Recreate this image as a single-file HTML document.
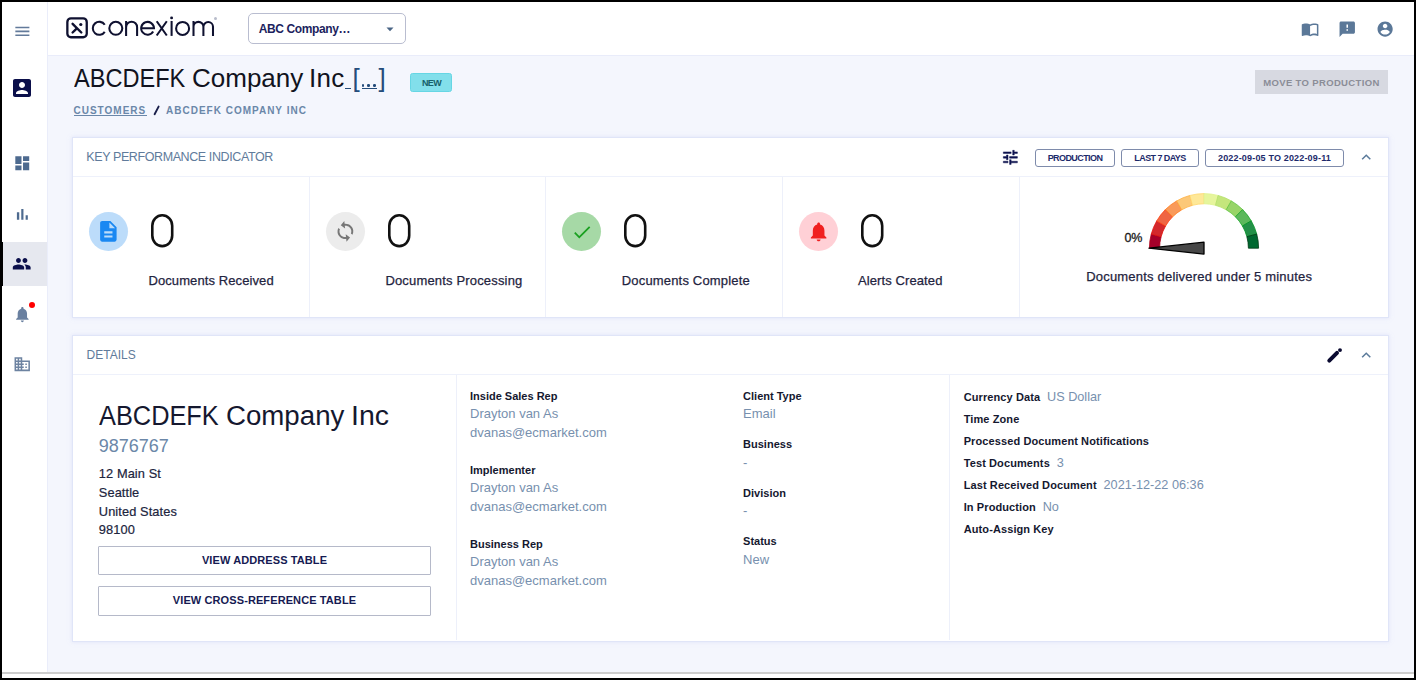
<!DOCTYPE html>
<html><head><meta charset="utf-8"><style>
html,body{margin:0;padding:0}
body{width:1416px;height:680px;background:#000;position:relative;overflow:hidden;font-family:"Liberation Sans", sans-serif}
.t{position:absolute;line-height:1;white-space:nowrap}
.btn{position:absolute;box-sizing:border-box;border:1px solid #7e8bab;border-radius:3px;font-size:9px;font-weight:700;color:#1d2a6b;text-align:center;line-height:16px;letter-spacing:-0.45px;background:#fff}
.btn2{position:absolute;box-sizing:border-box;border:1px solid #b5b9c9;border-radius:1px;font-size:11px;font-weight:700;color:#161a52;text-align:center;background:#fff;display:flex;align-items:center;justify-content:center;padding-bottom:1.5px;letter-spacing:0.1px}
</style></head><body>
<div style="position:absolute;left:2px;top:2px;width:1412px;height:670px;background:#f4f6fd"></div>
<div style="position:absolute;left:2px;top:2px;width:45px;height:670px;background:#fff"></div>
<div style="position:absolute;left:47px;top:2px;width:1px;height:670px;background:#eaedfa"></div>
<div style="position:absolute;left:48px;top:2px;width:1366px;height:53px;background:#fff"></div>
<div style="position:absolute;left:48px;top:55px;width:1366px;height:1px;background:#e9ecfa"></div>
<div style="position:absolute;left:2px;top:672px;width:1412px;height:6px;background:#fff"></div>
<div style="position:absolute;left:2px;top:672px;width:1412px;height:1.5px;background:#cdcdcd"></div>
<svg style="position:absolute;left:12.66px;top:22.40px;overflow:visible;" width="18.72" height="18.72" viewBox="0 0 24 24"><path fill="#627a9a" d="M3 18h18v-2H3v2zm0-5h18v-2H3v2zm0-7v2h18V6H3z"/></svg>
<svg style="position:absolute;left:10.20px;top:76.20px;overflow:visible;" width="24.00" height="24.00" viewBox="0 0 24 24"><path fill="#0b0f4a" d="M3 5v14c0 1.1.89 2 2 2h14c1.1 0 2-.9 2-2V5c0-1.1-.9-2-2-2H5c-1.11 0-2 .9-2 2zm12 4c0 1.66-1.34 3-3 3s-3-1.34-3-3 1.34-3 3-3 3 1.34 3 3zm-9 8c0-2 4-3.1 6-3.1s6 1.1 6 3.1v1H6v-1z"/></svg>
<svg style="position:absolute;left:12.90px;top:154.30px;overflow:visible;" width="18.53" height="18.53" viewBox="0 0 24 24"><path fill="#4d6a8f" d="M3 13h8V3H3v10zm0 8h8v-6H3v6zm10 0h8V11h-8v10zm0-18v6h8V3h-8z"/></svg>
<svg style="position:absolute;left:13.00px;top:204.60px;overflow:visible;" width="18.72" height="18.72" viewBox="0 0 24 24"><path fill="#4d6a8f" d="M5 9.2h3V19H5zM10.6 5h2.8v14h-2.8zm5.6 8H19v6h-2.8z"/></svg>
<div style="position:absolute;left:2px;top:242px;width:45px;height:44px;background:#e6e8ef"></div>
<div style="position:absolute;left:2px;top:242px;width:1px;height:44px;background:#000"></div>
<svg style="position:absolute;left:12.10px;top:254.25px;overflow:visible;" width="19.44" height="19.44" viewBox="0 0 24 24"><path fill="#0b0f4a" d="M16 11c1.66 0 2.99-1.34 2.99-3S17.66 5 16 5c-1.66 0-3 1.34-3 3s1.34 3 3 3zm-8 0c1.66 0 2.99-1.34 2.99-3S9.66 5 8 5C6.34 5 5 6.34 5 8s1.340 3 3 3zm0 2c-2.33 0-7 1.17-7 3.5V19h14v-2.5c0-2.33-4.67-3.5-7-3.5zm8 0c-.29 0-.62.02-.97.05 1.16.84 1.97 1.97 1.970 3.45V19h6v-2.5c0-2.33-4.67-3.5-7-3.5z"/></svg>
<svg style="position:absolute;left:12.90px;top:304.95px;overflow:visible;" width="18.72" height="18.72" viewBox="0 0 24 24"><path fill="#6a80a0" d="M12 22c1.1 0 2-.9 2-2h-4c0 1.1.89 2 2 2zm6-6v-5c0-3.07-1.64-5.64-4.5-6.32V4c0-.83-.67-1.5-1.5-1.5s-1.5.67-1.5 1.5v.68C7.63 5.36 6 7.920 6 11v5l-2 2v1h16v-1l-2-2z"/></svg>
<div style="position:absolute;left:28.7px;top:301.8px;width:6.4px;height:6.4px;background:#f00;border-radius:50%"></div>
<svg style="position:absolute;left:13.20px;top:355.40px;overflow:visible;" width="18.48" height="18.48" viewBox="0 0 24 24"><path fill="#6d83a1" d="M12 7V3H2v18h20V7H12zM6 19H4v-2h2v2zm0-4H4v-2h2v2zm0-4H4V9h2v2zm0-4H4V5h2v2zm4 12H8v-2h2v2zm0-4H8v-2h2v2zm0-4H8V9h2v2zm0-4H8V5h2v2zm10 12h-8v-2h2v-2h-2v-2h2v-2h-2V9h8v10zm-2-8h-2v2h2v-2zm0 4h-2v2h2v-2z"/></svg>
<svg style="position:absolute;left:64px;top:16px" width="26" height="24" viewBox="0 0 26 24"><rect x="3.35" y="2.35" width="19.4" height="18.9" rx="3.6" fill="none" stroke="#0f1130" stroke-width="2.3"/><path d="M8.6 7.8 L17.3 16.5 M8.6 16.5 L12.1 13.1" stroke="#0f1130" stroke-width="2.4" stroke-linecap="round" fill="none"/><circle cx="16.8" cy="8.5" r="1.6" fill="#0f1130"/></svg>
<svg style="position:absolute;left:88px;top:12px" width="132" height="30" viewBox="88 12 132 30"><g fill="none" stroke="#0f1130" stroke-width="2.05"><path d="M104.75 24.76 A6.5 6.5 0 1 0 104.75 31.84"/><circle cx="115.8" cy="28.3" r="6.5"/><path d="M126.1 20.950000000000003 V35.9 M126.1 27.2 A5.5 5.5 0 0 1 137.1 27.2 V35.9"/><path d="M141.2 28.3 H154.0 A6.4 6.4 0 1 0 153.14 31.50"/><path d="M156.7 21.25 L166.8 35.5 M166.8 21.25 L156.7 35.5"/><path d="M171.6 20.950000000000003 V35.9"/><circle cx="182.6" cy="28.400000000000002" r="6.5"/><path d="M193.5 20.950000000000003 V35.9 M193.5 26.8 A4.95 4.95 0 0 1 203.4 26.8 V35.9 M203.4 26.8 A4.8 4.8 0 0 1 213.0 26.8 V35.9"/></g><circle cx="171.6" cy="17.9" r="1.45" fill="#0f1130"/></svg>
<div style="position:absolute;left:213.8px;top:17.4px;width:3px;height:3px;border-radius:50%;background:#b8bccb"></div>
<div style="position:absolute;left:248px;top:13px;width:158px;height:31px;box-sizing:border-box;border:1px solid #b9bdd0;border-radius:5px;background:#fff"></div>
<div class="t" style="left:258.80px;top:22.54px;font-size:12px;font-weight:700;color:#1c1f5e;letter-spacing:-0.4px;">ABC Company…</div>
<svg style="position:absolute;left:386px;top:26.5px" width="8" height="5" viewBox="0 0 8 5"><path d="M0.5 0.5 L7.5 0.5 L4 4.2 Z" fill="#4a6585"/></svg>
<svg style="position:absolute;left:1300.50px;top:19.90px;overflow:visible;" width="18.17" height="18.17" viewBox="0 0 24 24"><path fill="#5b7898" d="M21 5c-1.11-.35-2.33-.5-3.5-.5-1.95 0-4.05.4-5.5 1.5-1.45-1.1-3.550-1.5-5.5-1.5S2.45 4.9 1 6v14.65c0 .25.25.5.5.5.1 0 .15-.05.25-.05C3.1 20.45 5.05 20 6.5 20c1.95 0 4.05.4 5.5 1.5 1.35-.85 3.8-1.5 5.5-1.5 1.65 0 3.35.3 4.75 1.05.1.05.15.05.25.05.25 0 .5-.25.5-.5V6c-.6-.45-1.25-.75-2-1zm0 13.5c-1.1-.35-2.3-.5-3.5-.5-1.7 0-4.15.65-5.5 1.5V8c1.35-.85 3.8-1.5 5.5-1.5 1.2 0 2.4.15 3.5.5v11.5z"/></svg>
<svg style="position:absolute;left:1337.80px;top:19.90px;overflow:visible;" width="18.48" height="18.48" viewBox="0 0 24 24"><path fill="#5b7898" d="M20 2H4c-1.1 0-1.99.9-1.99 2L2 22l4-4h14c1.1 0 2-.9 2-2V4c0-1.1-.9-2-2-2zm-7 12h-2v-2h2v2zm0-4h-2V6h2v4z"/></svg>
<svg style="position:absolute;left:1376.30px;top:19.90px;overflow:visible;" width="18.24" height="18.24" viewBox="0 0 24 24"><path fill="#5b7898" d="M12 2C6.48 2 2 6.48 2 12s4.48 10 10 10 10-4.48 10-10S17.52 2 12 2zm0 3c1.66 0 3 1.34 3 3s-1.34 3-3 3-3-1.34-3-3 1.34-3 3-3zm0 14.2c-2.5 0-4.71-1.28-6-3.220.03-1.99 4-3.08 6-3.08 1.99 0 5.97 1.09 6 3.08-1.29 1.94-3.5 3.22-6 3.22z"/></svg>
<div class="t" style="left:74.00px;top:64.89px;font-size:26px;font-weight:400;color:#111320;letter-spacing:0px;transform:scaleX(0.906);transform-origin:0 0">ABCDEFK</div>
<div class="t" style="left:192.00px;top:64.89px;font-size:26px;font-weight:400;color:#111320;letter-spacing:0px;">Company</div>
<div class="t" style="left:308.90px;top:64.89px;font-size:26px;font-weight:400;color:#111320;letter-spacing:0.3px;">Inc</div>
<div class="t" style="left:352.50px;top:64.89px;font-size:26px;font-weight:400;color:#244c7b;letter-spacing:0px;">[</div>
<div class="t" style="left:378.50px;top:64.89px;font-size:26px;font-weight:400;color:#244c7b;letter-spacing:0px;">]</div>
<div style="position:absolute;left:361.6px;top:84.2px;width:2.4px;height:2.4px;background:#244c7b;border-radius:50%"></div>
<div style="position:absolute;left:367.40000000000003px;top:84.2px;width:2.4px;height:2.4px;background:#244c7b;border-radius:50%"></div>
<div style="position:absolute;left:373.2px;top:84.2px;width:2.4px;height:2.4px;background:#244c7b;border-radius:50%"></div>
<div style="position:absolute;left:361.5px;top:88.2px;width:15.3px;height:1.3px;background:#244c7b"></div>
<div style="position:absolute;left:345px;top:88.2px;width:6.4px;height:1.3px;background:#244c7b"></div>
<div style="position:absolute;left:410px;top:73px;width:42px;height:19px;box-sizing:border-box;background:#82dfeb;border:1px solid #66d6e4;border-radius:2.5px"></div>
<div class="t" style="left:421.90px;top:78.78px;font-size:9px;font-weight:700;color:#17606a;letter-spacing:-0.55px;">NEW</div>
<div class="t" style="left:73.50px;top:106.33px;font-size:10px;font-weight:700;color:#6a87a9;letter-spacing:1.0px;">CUSTOMERS</div>
<div style="position:absolute;left:73.5px;top:115px;width:73px;height:1.2px;background:#6a87a9"></div>
<svg style="position:absolute;left:150px;top:104px" width="12" height="14" viewBox="150 104 12 14"><path d="M158.6 106.6 L154.6 114.2" stroke="#1a1f4a" stroke-width="1.9" stroke-linecap="round"/></svg>
<div class="t" style="left:166.00px;top:106.33px;font-size:10px;font-weight:700;color:#6a87a9;letter-spacing:1.0px;">ABCDEFK COMPANY INC</div>
<div style="position:absolute;left:1255px;top:70px;width:133px;height:24px;background:#d7d9e1"></div>
<div class="t" style="left:1263.20px;top:78.36px;font-size:9.5px;font-weight:700;color:#8b8d97;letter-spacing:0.35px;">MOVE TO PRODUCTION</div>
<div style="position:absolute;left:72px;top:137px;width:1317px;height:181px;box-sizing:border-box;border:1px solid #e0e5f8;background:#fff;box-shadow:0 0 4px rgba(205,210,245,0.55)"></div>
<div style="position:absolute;left:73px;top:176px;width:1315px;height:1px;background:#eef1fb"></div>
<div class="t" style="left:86.30px;top:150.82px;font-size:12.5px;font-weight:400;color:#607b9b;letter-spacing:-0.4px;">KEY PERFORMANCE INDICATOR</div>
<svg style="position:absolute;left:1001.00px;top:148.00px;overflow:visible;" width="18.72" height="18.72" viewBox="0 0 24 24"><path fill="#0f1450" d="M3 17v2h6v-2H3zM3 5v2h10V5H3zm10 16v-2h8v-2h-8v-2h-2v6h2zM7 9v2H3v2h4v2h2V9H7zm14 4v-2H11v2h10zm-6-4h2V7h4V5h-4V3h-2v6z" stroke="#0f1450" stroke-width="0.6" stroke-linejoin="round"/></svg>
<div class="btn" style="left:1035px;top:148.5px;width:80px;height:18px;letter-spacing:-0.59px">PRODUCTION</div>
<div class="btn" style="left:1121px;top:148.5px;width:78px;height:18px;letter-spacing:-0.57px">LAST 7 DAYS</div>
<div class="btn" style="left:1205px;top:148.5px;width:139px;height:18px;letter-spacing:0.17px">2022-09-05 TO 2022-09-11</div>
<svg style="position:absolute;left:1356.70px;top:148.30px;overflow:visible;" width="18.48" height="18.48" viewBox="0 0 24 24"><path fill="#5a7a9a" d="M12 8l-6 6 1.41 1.41L12 10.83l4.59 4.58L18 14z"/></svg>
<div style="position:absolute;left:309px;top:177px;width:1px;height:140px;background:#edf0fa"></div>
<div style="position:absolute;left:545px;top:177px;width:1px;height:140px;background:#edf0fa"></div>
<div style="position:absolute;left:782px;top:177px;width:1px;height:140px;background:#edf0fa"></div>
<div style="position:absolute;left:1019px;top:177px;width:1px;height:140px;background:#edf0fa"></div>
<div style="position:absolute;left:89.1px;top:212.1px;width:39px;height:39px;background:#bcdcfa;border-radius:50%"></div>
<div style="position:absolute;left:326.1px;top:212.1px;width:39px;height:39px;background:#ececec;border-radius:50%"></div>
<div style="position:absolute;left:562.4px;top:212.1px;width:39px;height:39px;background:#a6d9a6;border-radius:50%"></div>
<div style="position:absolute;left:798.9px;top:212.1px;width:39px;height:39px;background:#ffd0d6;border-radius:50%"></div>
<svg style="position:absolute;left:95.90px;top:219.40px;overflow:visible;" width="24.72" height="24.72" viewBox="0 0 24 24"><path fill="#1a88f2" d="M14 2H6c-1.1 0-1.99.9-1.99 2L4 20c0 1.1.89 2 1.99 2H18c1.1 0 2-.9 2-2V8l-6-6zm2 16H8v-2h8v2zm0-4H8v-2h8v2zm-3-5V3.5L18.5 9H13z"/></svg>
<svg style="position:absolute;left:334.20px;top:220.20px;overflow:visible;transform:rotate(-6deg) scale(1.04,1)" width="22.80" height="22.80" viewBox="0 0 24 24"><path fill="#777777" d="M12 4V1L8 5l4 4V6c3.31 0 6 2.69 6 6 0 1.01-.25 1.97-.7 2.8l1.46 1.46C19.54 15.03 20 13.57 20 12c0-4.42-3.58-8-8-8zm0 14c-3.31 0-6-2.69-6-6 0-1.01.25-1.97.7-2.8L5.24 7.740C4.46 8.97 4 10.43 4 12c0 4.42 3.58 8 8 8v3l4-4-4-4v3z"/></svg>
<svg style="position:absolute;left:570.50px;top:220.60px;overflow:visible;" width="22.08" height="22.08" viewBox="0 0 24 24"><path fill="#1aa020" d="M9 16.2L4.8 12l-1.4 1.4L9 19 21 7l-1.4-1.4L9 16.2z"/></svg>
<svg style="position:absolute;left:806.70px;top:219.70px;overflow:visible;" width="23.28" height="23.28" viewBox="0 0 24 24"><path fill="#f02020" d="M12 22c1.1 0 2-.9 2-2h-4c0 1.1.89 2 2 2zm6-6v-5c0-3.07-1.64-5.64-4.5-6.32V4c0-.83-.67-1.5-1.5-1.5s-1.5.67-1.5 1.5v.68C7.63 5.36 6 7.920 6 11v5l-2 2v1h16v-1l-2-2z"/></svg>
<svg style="position:absolute;left:151.4px;top:214.2px" width="24" height="34" viewBox="0 0 24 34"><rect x="1.3" y="1.3" width="19.9" height="30.8" rx="9.9" ry="10.5" fill="none" stroke="#111" stroke-width="2.6"/></svg>
<svg style="position:absolute;left:387.9px;top:214.2px" width="24" height="34" viewBox="0 0 24 34"><rect x="1.3" y="1.3" width="19.9" height="30.8" rx="9.9" ry="10.5" fill="none" stroke="#111" stroke-width="2.6"/></svg>
<svg style="position:absolute;left:624.4px;top:214.2px" width="24" height="34" viewBox="0 0 24 34"><rect x="1.3" y="1.3" width="19.9" height="30.8" rx="9.9" ry="10.5" fill="none" stroke="#111" stroke-width="2.6"/></svg>
<svg style="position:absolute;left:861.0px;top:214.2px" width="24" height="34" viewBox="0 0 24 34"><rect x="1.3" y="1.3" width="19.9" height="30.8" rx="9.9" ry="10.5" fill="none" stroke="#111" stroke-width="2.6"/></svg>
<div class="t" style="left:148.40px;top:274.10px;font-size:13px;font-weight:400;color:#1f2440;letter-spacing:0.1px;-webkit-text-stroke:0.25px #1f2440">Documents Received</div>
<div class="t" style="left:385.40px;top:274.10px;font-size:13px;font-weight:400;color:#1f2440;letter-spacing:0.17px;-webkit-text-stroke:0.25px #1f2440">Documents Processing</div>
<div class="t" style="left:621.80px;top:274.10px;font-size:13px;font-weight:400;color:#1f2440;letter-spacing:0.17px;-webkit-text-stroke:0.25px #1f2440">Documents Complete</div>
<div class="t" style="left:858.00px;top:274.10px;font-size:13px;font-weight:400;color:#1f2440;letter-spacing:0.1px;-webkit-text-stroke:0.25px #1f2440">Alerts Created</div>
<div class="t" style="left:1124.60px;top:231.62px;font-size:12.5px;font-weight:400;color:#1a1a1a;letter-spacing:-0.3px;-webkit-text-stroke:0.3px #1a1a1a">0%</div>
<div class="t" style="left:1086.20px;top:270.10px;font-size:13px;font-weight:400;color:#1f2440;letter-spacing:0.2px;-webkit-text-stroke:0.25px #1f2440">Documents delivered under 5 minutes</div>
<svg style="position:absolute;left:1100px;top:180px" width="200" height="100" viewBox="0 0 200 100"><path d="M49.40 68.20 A54.6 54.6 0 0 1 51.26 54.07 L61.11 56.71 A44.4 44.4 0 0 0 59.60 68.20 Z" fill="#a5002a" stroke="#b0001a" stroke-width="0.8"/><path d="M51.26 54.07 A54.6 54.6 0 0 1 56.72 40.90 L65.55 46.00 A44.4 44.4 0 0 0 61.11 56.71 Z" fill="#d3282c" stroke="#e0100a" stroke-width="0.8"/><path d="M56.72 40.90 A54.6 54.6 0 0 1 65.39 29.59 L72.60 36.80 A44.4 44.4 0 0 0 65.55 46.00 Z" fill="#ef6543" stroke="#ff4010" stroke-width="0.8"/><path d="M65.39 29.59 A54.6 54.6 0 0 1 76.70 20.92 L81.80 29.75 A44.4 44.4 0 0 0 72.60 36.80 Z" fill="#f99a5a" stroke="#ff7a1a" stroke-width="0.8"/><path d="M76.70 20.92 A54.6 54.6 0 0 1 89.87 15.46 L92.51 25.31 A44.4 44.4 0 0 0 81.80 29.75 Z" fill="#fcc878" stroke="#ffae40" stroke-width="0.8"/><path d="M89.87 15.46 A54.6 54.6 0 0 1 104.00 13.60 L104.00 23.80 A44.4 44.4 0 0 0 92.51 25.31 Z" fill="#fee898" stroke="#ffd870" stroke-width="0.8"/><path d="M104.00 13.60 A54.6 54.6 0 0 1 118.13 15.46 L115.49 25.31 A44.4 44.4 0 0 0 104.00 23.80 Z" fill="#e6f59c" stroke="#e0f290" stroke-width="0.8"/><path d="M118.13 15.46 A54.6 54.6 0 0 1 131.30 20.92 L126.20 29.75 A44.4 44.4 0 0 0 115.49 25.31 Z" fill="#c4e67c" stroke="#b4e068" stroke-width="0.8"/><path d="M131.30 20.92 A54.6 54.6 0 0 1 142.61 29.59 L135.40 36.80 A44.4 44.4 0 0 0 126.20 29.75 Z" fill="#98d468" stroke="#60c440" stroke-width="0.8"/><path d="M142.61 29.59 A54.6 54.6 0 0 1 151.28 40.90 L142.45 46.00 A44.4 44.4 0 0 0 135.40 36.80 Z" fill="#5cb85c" stroke="#18a428" stroke-width="0.8"/><path d="M151.28 40.90 A54.6 54.6 0 0 1 156.74 54.07 L146.89 56.71 A44.4 44.4 0 0 0 142.45 46.00 Z" fill="#239048" stroke="#009024" stroke-width="0.8"/><path d="M156.74 54.07 A54.6 54.6 0 0 1 158.60 68.20 L148.40 68.20 A44.4 44.4 0 0 0 146.89 56.71 Z" fill="#006830" stroke="#003a14" stroke-width="0.8"/><path d="M49 68.19999999999999 L104 62.19999999999999 L104 74.1 Z" fill="#474747" stroke="#000" stroke-width="1.3" stroke-linejoin="round"/></svg>
<div style="position:absolute;left:72px;top:335px;width:1317px;height:307px;box-sizing:border-box;border:1px solid #e0e5f8;background:#fff;box-shadow:0 0 4px rgba(205,210,245,0.55)"></div>
<div style="position:absolute;left:73px;top:374px;width:1315px;height:1px;background:#eef1fb"></div>
<div class="t" style="left:86.60px;top:349.14px;font-size:12px;font-weight:400;color:#607b9b;letter-spacing:0px;">DETAILS</div>
<svg style="position:absolute;left:1320px;top:342px" width="28" height="26" viewBox="1320 342 28 26"><path d="M1329.3 360.7 L1337.0 352.9" stroke="#0a0a30" stroke-width="4.0" stroke-linecap="round"/><circle cx="1340.0" cy="350.1" r="1.95" fill="#0a0a30"/></svg>
<svg style="position:absolute;left:1356.70px;top:346.20px;overflow:visible;" width="18.48" height="18.48" viewBox="0 0 24 24"><path fill="#5a7a9a" d="M12 8l-6 6 1.41 1.41L12 10.83l4.59 4.58L18 14z"/></svg>
<div style="position:absolute;left:456px;top:375px;width:1px;height:265px;background:#edf0fa"></div>
<div style="position:absolute;left:949px;top:375px;width:1px;height:265px;background:#edf0fa"></div>
<div class="t" style="left:99.00px;top:403.34px;font-size:27px;font-weight:400;color:#15182f;letter-spacing:0px;transform:scaleX(0.939);transform-origin:0 0">ABCDEFK</div>
<div class="t" style="left:226.20px;top:403.34px;font-size:27px;font-weight:400;color:#15182f;letter-spacing:0px;transform:scaleX(1.024);transform-origin:0 0">Company</div>
<div class="t" style="left:351.30px;top:403.34px;font-size:27px;font-weight:400;color:#15182f;letter-spacing:0px;transform:scaleX(1.056);transform-origin:0 0">Inc</div>
<div class="t" style="left:98.80px;top:436.56px;font-size:18px;font-weight:400;color:#6b87a8;letter-spacing:0px;">9876767</div>
<div class="t" style="left:98.80px;top:467.66px;font-size:12.8px;font-weight:400;color:#20243d;letter-spacing:0.1px;-webkit-text-stroke:0.2px #20243d">12 Main St</div>
<div class="t" style="left:98.80px;top:486.86px;font-size:12.8px;font-weight:400;color:#20243d;letter-spacing:0.1px;-webkit-text-stroke:0.2px #20243d">Seattle</div>
<div class="t" style="left:98.80px;top:505.56px;font-size:12.8px;font-weight:400;color:#20243d;letter-spacing:0.1px;-webkit-text-stroke:0.2px #20243d">United States</div>
<div class="t" style="left:98.80px;top:523.86px;font-size:12.8px;font-weight:400;color:#20243d;letter-spacing:0.1px;-webkit-text-stroke:0.2px #20243d">98100</div>
<div class="btn2" style="left:98px;top:546px;width:333px;height:29px;">VIEW ADDRESS TABLE</div>
<div class="btn2" style="left:98px;top:586px;width:333px;height:30px;">VIEW CROSS-REFERENCE TABLE</div>
<div class="t" style="left:470.00px;top:390.89px;font-size:11px;font-weight:700;color:#15182f;letter-spacing:0px;">Inside Sales Rep</div>
<div class="t" style="left:470.00px;top:407.40px;font-size:13px;font-weight:400;color:#7790ae;letter-spacing:0px;">Drayton van As</div>
<div class="t" style="left:470.00px;top:426.20px;font-size:13px;font-weight:400;color:#7790ae;letter-spacing:0px;">dvanas@ecmarket.com</div>
<div class="t" style="left:470.00px;top:464.79px;font-size:11px;font-weight:700;color:#15182f;letter-spacing:0px;">Implementer</div>
<div class="t" style="left:470.00px;top:481.30px;font-size:13px;font-weight:400;color:#7790ae;letter-spacing:0px;">Drayton van As</div>
<div class="t" style="left:470.00px;top:500.10px;font-size:13px;font-weight:400;color:#7790ae;letter-spacing:0px;">dvanas@ecmarket.com</div>
<div class="t" style="left:470.00px;top:538.69px;font-size:11px;font-weight:700;color:#15182f;letter-spacing:0px;">Business Rep</div>
<div class="t" style="left:470.00px;top:555.20px;font-size:13px;font-weight:400;color:#7790ae;letter-spacing:0px;">Drayton van As</div>
<div class="t" style="left:470.00px;top:574.00px;font-size:13px;font-weight:400;color:#7790ae;letter-spacing:0px;">dvanas@ecmarket.com</div>
<div class="t" style="left:743.10px;top:390.69px;font-size:11px;font-weight:700;color:#15182f;letter-spacing:0px;">Client Type</div>
<div class="t" style="left:743.10px;top:407.00px;font-size:13px;font-weight:400;color:#7790ae;letter-spacing:0px;">Email</div>
<div class="t" style="left:743.10px;top:439.19px;font-size:11px;font-weight:700;color:#15182f;letter-spacing:0px;">Business</div>
<div class="t" style="left:743.10px;top:455.50px;font-size:13px;font-weight:400;color:#7790ae;letter-spacing:0px;">-</div>
<div class="t" style="left:743.10px;top:487.69px;font-size:11px;font-weight:700;color:#15182f;letter-spacing:0px;">Division</div>
<div class="t" style="left:743.10px;top:504.00px;font-size:13px;font-weight:400;color:#7790ae;letter-spacing:0px;">-</div>
<div class="t" style="left:743.10px;top:536.19px;font-size:11px;font-weight:700;color:#15182f;letter-spacing:0px;">Status</div>
<div class="t" style="left:743.10px;top:552.50px;font-size:13px;font-weight:400;color:#7790ae;letter-spacing:0px;">New</div>
<div class="t" style="left:963.7px;top:390.00px;font-size:13px;"><span style="font-size:11px;font-weight:700;color:#15182f;letter-spacing:0.1px">Currency Data</span><span style="color:#7790ae;margin-left:6.8px;font-size:12.7px">US Dollar</span></div>
<div class="t" style="left:963.7px;top:411.95px;font-size:13px;"><span style="font-size:11px;font-weight:700;color:#15182f;letter-spacing:0.1px">Time Zone</span><span style="color:#7790ae;margin-left:6.8px;font-size:12.7px"></span></div>
<div class="t" style="left:963.7px;top:433.90px;font-size:13px;"><span style="font-size:11px;font-weight:700;color:#15182f;letter-spacing:0.1px">Processed Document Notifications</span><span style="color:#7790ae;margin-left:6.8px;font-size:12.7px"></span></div>
<div class="t" style="left:963.7px;top:455.85px;font-size:13px;"><span style="font-size:11px;font-weight:700;color:#15182f;letter-spacing:0.1px">Test Documents</span><span style="color:#7790ae;margin-left:6.8px;font-size:12.7px">3</span></div>
<div class="t" style="left:963.7px;top:477.80px;font-size:13px;"><span style="font-size:11px;font-weight:700;color:#15182f;letter-spacing:0.1px">Last Received Document</span><span style="color:#7790ae;margin-left:6.8px;font-size:12.7px">2021-12-22 06:36</span></div>
<div class="t" style="left:963.7px;top:499.75px;font-size:13px;"><span style="font-size:11px;font-weight:700;color:#15182f;letter-spacing:0.1px">In Production</span><span style="color:#7790ae;margin-left:6.8px;font-size:12.7px">No</span></div>
<div class="t" style="left:963.7px;top:521.70px;font-size:13px;"><span style="font-size:11px;font-weight:700;color:#15182f;letter-spacing:0.1px">Auto-Assign Key</span><span style="color:#7790ae;margin-left:6.8px;font-size:12.7px"></span></div>
</body></html>
